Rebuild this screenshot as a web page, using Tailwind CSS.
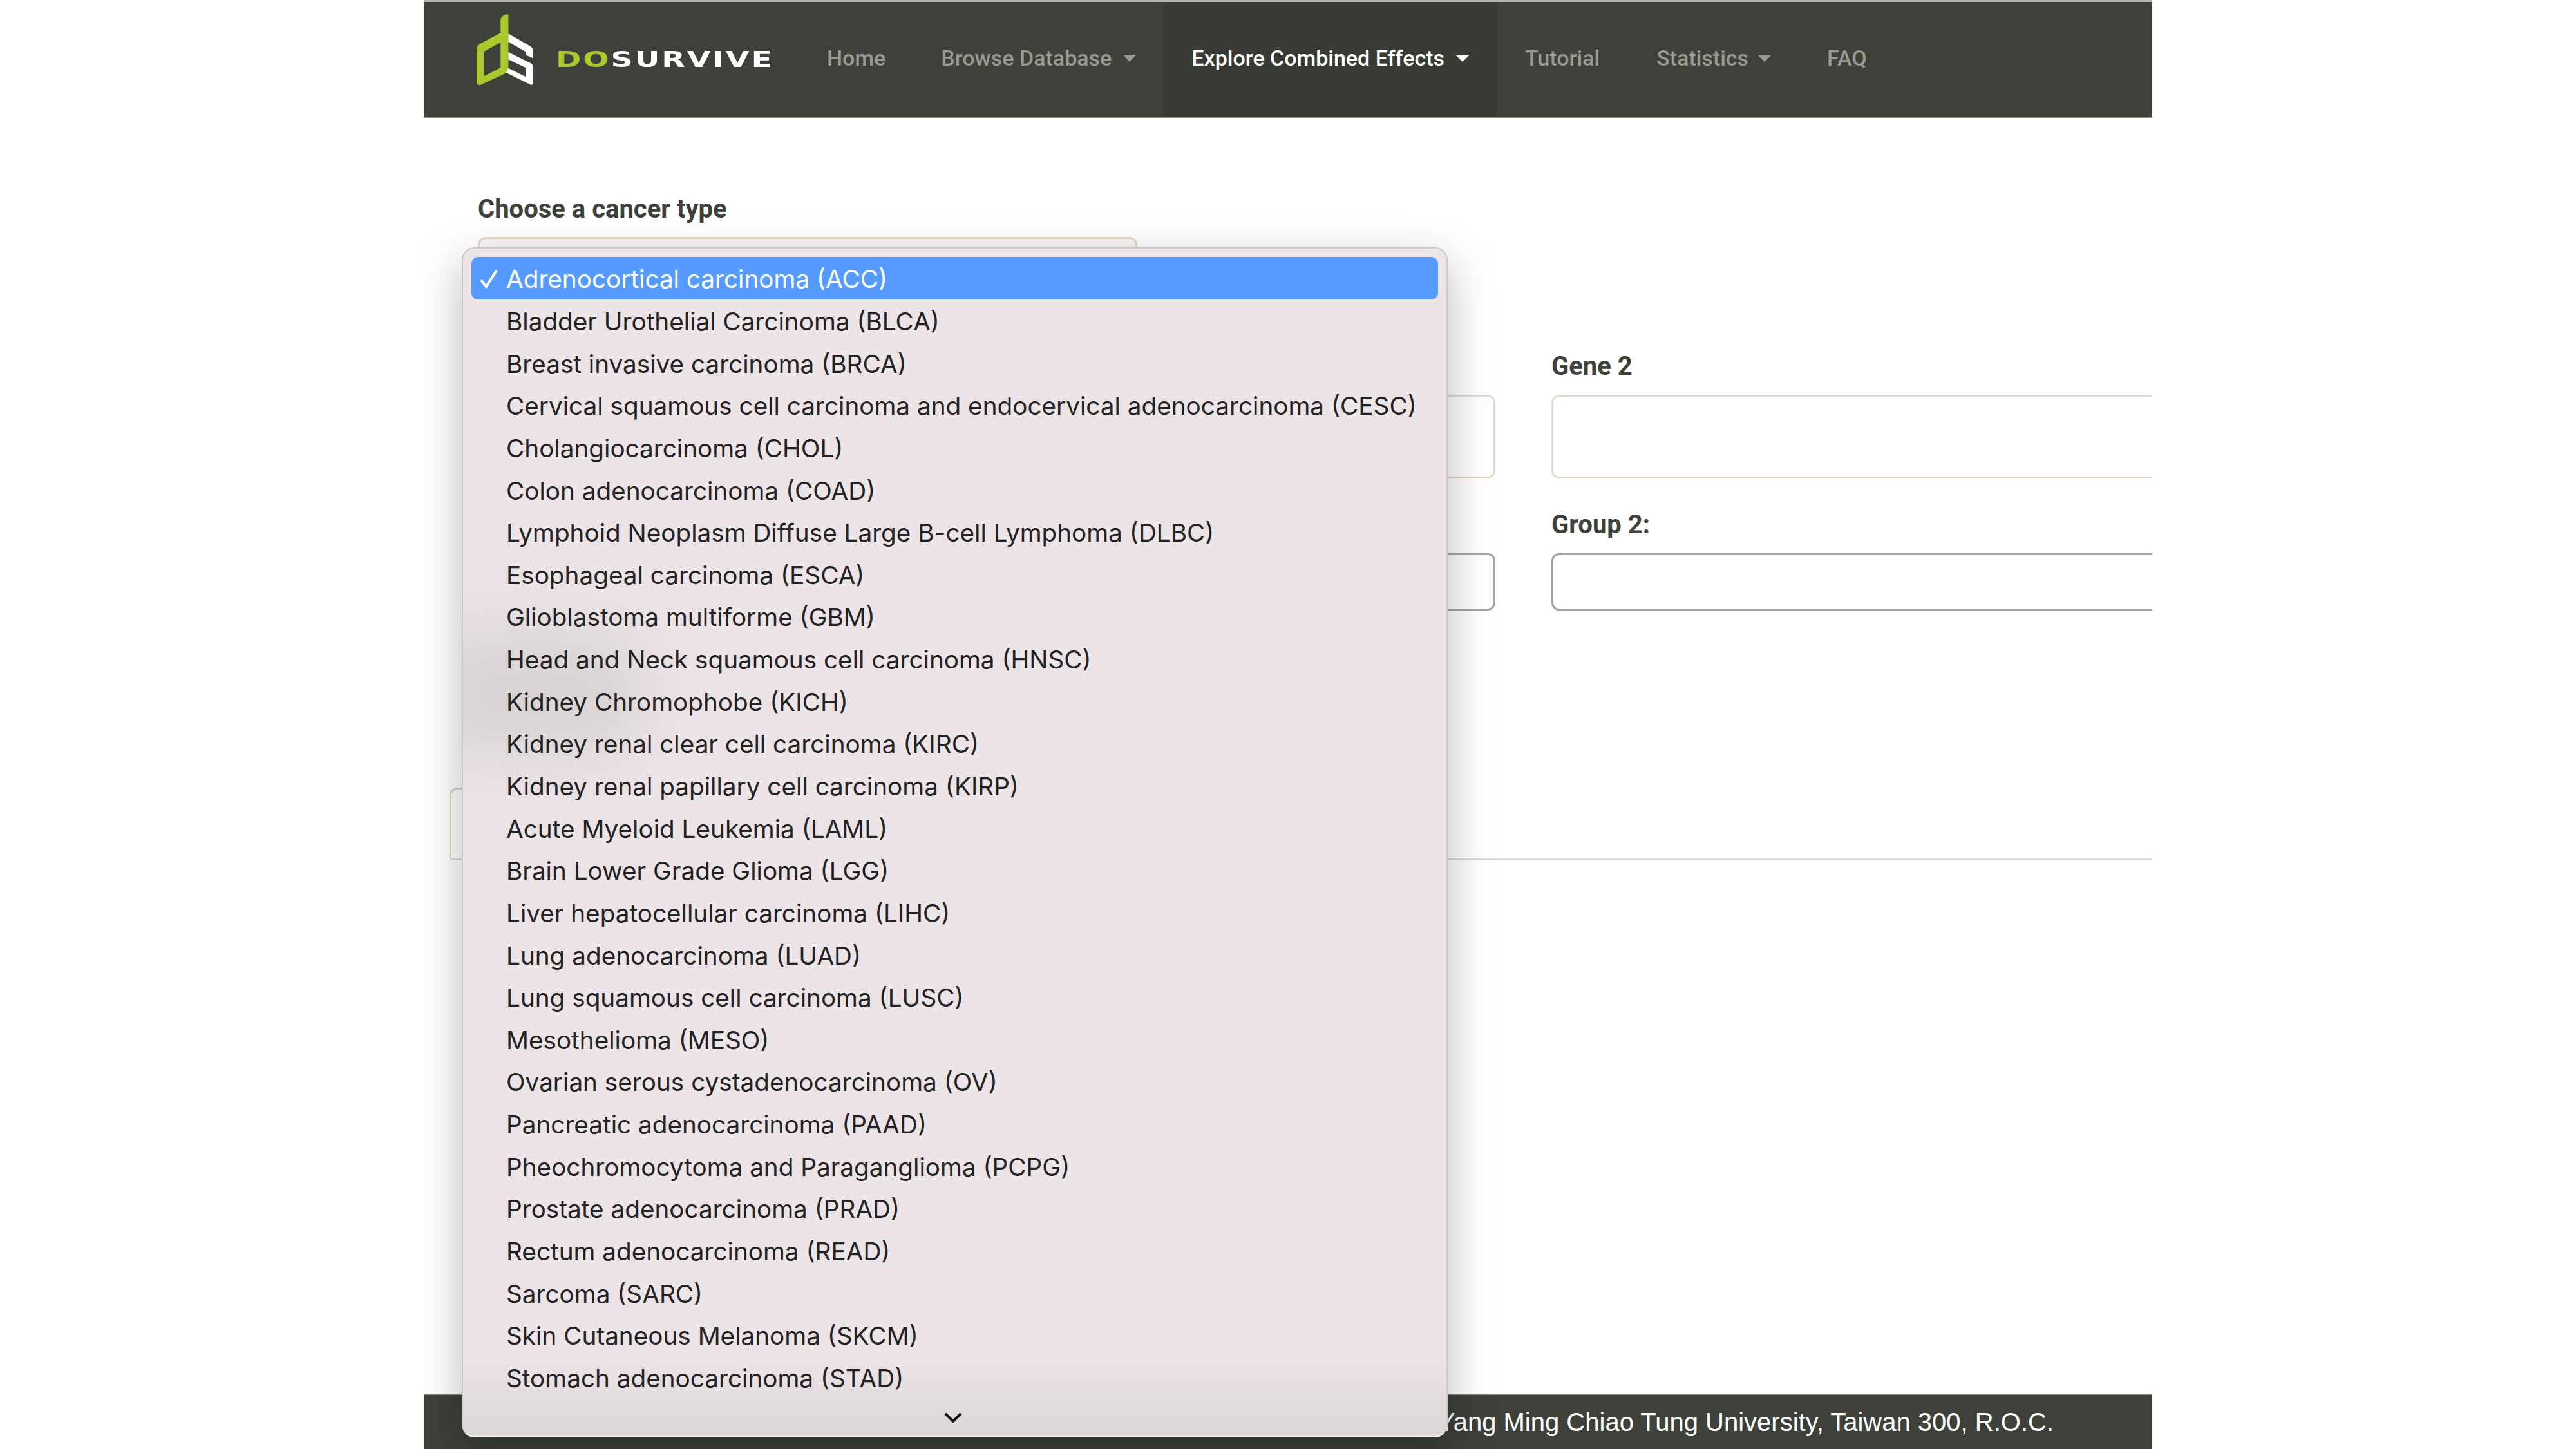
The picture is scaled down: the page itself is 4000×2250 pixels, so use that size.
<!DOCTYPE html>
<html lang="en">
<head>
    <meta charset="UTF-8">
    <title>DoSurvive - Explore Combined Effects</title>
    <script src="https://cdn.jsdelivr.net/npm/@tailwindcss/browser@4"></script>
</head>
<body class="bg-white font-['Roboto',sans-serif]">
<div class="relative w-[2684px] h-[2250px] mx-auto flex flex-col overflow-hidden bg-white">

    <!-- Navbar -->
    <nav class="h-[183px] shrink-0 flex items-stretch bg-[#3e403a] border-t-[3px] border-t-[#b4b4b0] border-b-[2px] border-b-[#8f8f87] text-[34px] font-medium text-[#9a9a90]">
        <a class="relative w-[583px] shrink-0 block">
            <svg class="absolute left-[72px] top-[12px]" width="110" height="130" viewBox="0 0 330 390">
                <path fill="#a9c92f" fill-rule="evenodd" d="M142 45Q145 25 178 20L178 290L50 350Q30 355 30 335L30 185Q30 170 45 160L142 108ZM65 195L142 152L142 270L65 310Z"/>
                <path fill="#ffffff" d="M178 112L280 170Q293 178 293 190L293 226L262 212Q258 208 258 195L178 150Z"/>
                <path fill="#ffffff" d="M178 198L280 248Q293 255 293 265L293 340Q293 355 278 348L168 293L178 272L258 312L258 270L178 232Z"/>
            </svg>
            <span class="absolute left-[205px] top-[73px] font-['DejaVu_Sans',sans-serif] font-bold text-[33px] leading-[33px] tracking-[2px] whitespace-nowrap origin-left scale-x-[1.44]"><span class="text-[#a9c92f]">DO</span><span class="text-white">SURVIVE</span></span>
        </a>
        <a class="flex items-center px-[43px] pb-[3px]">Home</a>
        <a class="flex items-center px-[43px] pb-[3px]">Browse Database<span class="ml-[18px] w-0 h-0 border-x-[10px] border-x-transparent border-t-[11px] border-t-[#9a9a90]"></span></a>
        <a class="flex items-center px-[43px] pb-[3px] bg-[#383a34] text-white">Explore Combined Effects<span class="ml-[17px] w-0 h-0 border-x-[11px] border-x-transparent border-t-[11px] border-t-white"></span></a>
        <a class="flex items-center pl-[43px] pr-[45px] pb-[3px]">Tutorial</a>
        <a class="flex items-center px-[43px] pb-[3px]">Statistics<span class="ml-[14px] w-0 h-0 border-x-[11px] border-x-transparent border-t-[11px] border-t-[#9a9a90]"></span></a>
        <a class="flex items-center px-[43px] pb-[3px]">FAQ</a>
    </nav>

    <!-- Form -->
    <main class="flex-1 pt-[120px] text-[40px] leading-[44px] font-bold text-[#3e403a]">
        <div class="px-[84px]">
            <label class="block">Choose a cancer type</label>
            <div class="mt-[21px] w-[1024px] h-[130px] rounded-[12px] border-[3px] border-[#e3d9cc] bg-[#f7f7f7]"></div>

            <div class="mt-[49px] grid grid-cols-[1580px_1580px] gap-x-[87px]">
                <div class="pt-[44px]">
                    <div class="mt-[22px] h-[130px] rounded-[12px] border-[3px] border-[#e6dccf]"></div>
                </div>
                <div>
                    <label class="block">Gene 2</label>
                    <div class="mt-[22px] h-[130px] rounded-[12px] border-[3px] border-[#e6dccf]"></div>
                </div>
                <div class="mt-[50px] pt-[44px]">
                    <div class="mt-[22px] h-[89px] rounded-[12px] border-[3px] border-[#a3a3a3]"></div>
                </div>
                <div class="mt-[50px]">
                    <label class="block">Group 2:</label>
                    <div class="mt-[22px] h-[89px] rounded-[12px] border-[3px] border-[#a3a3a3]"></div>
                </div>
            </div>
        </div>

        <!-- Tabs -->
        <div class="mt-[275px] ml-[40px] border-b-[3px] border-[#e3dacd]">
            <div class="w-[1000px] h-[110px] rounded-t-[12px] border-t-[3px] border-l-[3px] border-[#d8cfc0]"></div>
        </div>
    </main>

    <!-- Footer -->
    <footer class="h-[86px] shrink-0 flex items-center justify-end pr-[153px] bg-[#3e403a] border-t-[2px] border-t-[#8f8f87] font-['Liberation_Sans',sans-serif] text-[40px] text-white">
        Yang Ming Chiao Tung University, Taiwan 300, R.O.C.
    </footer>

    <!-- Open select menu -->
    <div class="absolute left-[59px] top-[384px] w-[1531px] h-[1848px] rounded-[20px] border-[2px] border-[#cdc8ca] border-b-white/70 bg-[#ede4e8] shadow-[0_24px_70px_rgba(0,0,0,0.28)]">
        <div class="absolute inset-0 overflow-hidden rounded-[18px]">
            <div class="absolute left-[-70px] top-[590px] w-[360px] h-[200px] rounded-full bg-[#d9d3d3] blur-[50px]"></div>
            <div class="absolute left-0 right-0 bottom-0 h-[130px] bg-linear-to-b from-transparent to-[#dcd6d6]"></div>
        </div>
        <ul class="relative pt-[13px] font-['Inter',sans-serif] text-[38.7px] text-[#232323] [&>li]:pt-[3px]">
            <li class="mx-[13px] h-[65.65px] flex items-center rounded-[10px] bg-[#559bff] text-white">
                <svg class="ml-[13px] mr-[13px]" width="28" height="30" viewBox="0 0 28 30"><path d="M2 17L10 27L26 2" fill="none" stroke="#ffffff" stroke-width="4"/></svg>Adrenocortical carcinoma (ACC)
            </li>
            <li class="h-[65.65px] flex items-center pl-[67px]">Bladder Urothelial Carcinoma (BLCA)</li>
            <li class="h-[65.65px] flex items-center pl-[67px]">Breast invasive carcinoma (BRCA)</li>
            <li class="h-[65.65px] flex items-center pl-[67px]">Cervical squamous cell carcinoma and endocervical adenocarcinoma (CESC)</li>
            <li class="h-[65.65px] flex items-center pl-[67px]">Cholangiocarcinoma (CHOL)</li>
            <li class="h-[65.65px] flex items-center pl-[67px]">Colon adenocarcinoma (COAD)</li>
            <li class="h-[65.65px] flex items-center pl-[67px]">Lymphoid Neoplasm Diffuse Large B-cell Lymphoma (DLBC)</li>
            <li class="h-[65.65px] flex items-center pl-[67px]">Esophageal carcinoma (ESCA)</li>
            <li class="h-[65.65px] flex items-center pl-[67px]">Glioblastoma multiforme (GBM)</li>
            <li class="h-[65.65px] flex items-center pl-[67px]">Head and Neck squamous cell carcinoma (HNSC)</li>
            <li class="h-[65.65px] flex items-center pl-[67px]">Kidney Chromophobe (KICH)</li>
            <li class="h-[65.65px] flex items-center pl-[67px]">Kidney renal clear cell carcinoma (KIRC)</li>
            <li class="h-[65.65px] flex items-center pl-[67px]">Kidney renal papillary cell carcinoma (KIRP)</li>
            <li class="h-[65.65px] flex items-center pl-[67px]">Acute Myeloid Leukemia (LAML)</li>
            <li class="h-[65.65px] flex items-center pl-[67px]">Brain Lower Grade Glioma (LGG)</li>
            <li class="h-[65.65px] flex items-center pl-[67px]">Liver hepatocellular carcinoma (LIHC)</li>
            <li class="h-[65.65px] flex items-center pl-[67px]">Lung adenocarcinoma (LUAD)</li>
            <li class="h-[65.65px] flex items-center pl-[67px]">Lung squamous cell carcinoma (LUSC)</li>
            <li class="h-[65.65px] flex items-center pl-[67px]">Mesothelioma (MESO)</li>
            <li class="h-[65.65px] flex items-center pl-[67px]">Ovarian serous cystadenocarcinoma (OV)</li>
            <li class="h-[65.65px] flex items-center pl-[67px]">Pancreatic adenocarcinoma (PAAD)</li>
            <li class="h-[65.65px] flex items-center pl-[67px]">Pheochromocytoma and Paraganglioma (PCPG)</li>
            <li class="h-[65.65px] flex items-center pl-[67px]">Prostate adenocarcinoma (PRAD)</li>
            <li class="h-[65.65px] flex items-center pl-[67px]">Rectum adenocarcinoma (READ)</li>
            <li class="h-[65.65px] flex items-center pl-[67px]">Sarcoma (SARC)</li>
            <li class="h-[65.65px] flex items-center pl-[67px]">Skin Cutaneous Melanoma (SKCM)</li>
            <li class="h-[65.65px] flex items-center pl-[67px]">Stomach adenocarcinoma (STAD)</li>
        </ul>
        <svg class="absolute left-[747px] bottom-[21px]" width="28" height="16" viewBox="0 0 28 16"><path d="M2 2L14 14L26 2" fill="none" stroke="#111111" stroke-width="4"/></svg>
    </div>
</div>
</body>
</html>
